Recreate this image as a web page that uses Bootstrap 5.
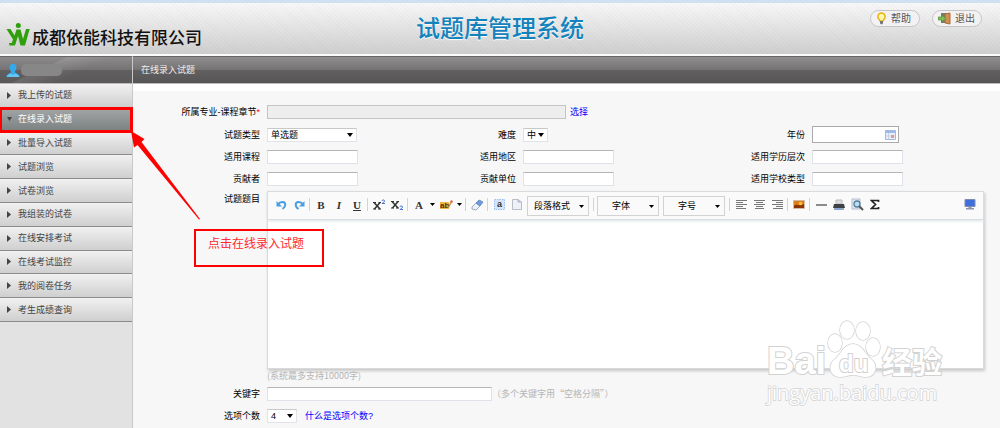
<!DOCTYPE html>
<html lang="zh-CN">
<head>
<meta charset="utf-8">
<meta name="viewport" content="width=device-width, initial-scale=1">
<title>试题库管理系统</title>
<link href="https://cdn.jsdelivr.net/npm/bootstrap@5.3.0/dist/css/bootstrap.min.css" rel="stylesheet">
<style>
body{font-family:"Liberation Sans","Noto Sans CJK SC",sans-serif;font-size:9px;line-height:12px;color:#000;background:#f7f7f7}
a{color:#00f;text-decoration:none}
.site-head{height:56px;border-top:3px solid #cfe0f0;border-bottom:2px solid #fafafa;background:repeating-linear-gradient(45deg,rgba(0,0,0,.02) 0 1px,transparent 1px 3px),linear-gradient(#f8f8f8,#cecece)}
.brand{font-size:17px;line-height:24px;font-weight:500;color:#111;padding:20px 0 0 6px;gap:2px}
.sys-title{font-size:24px;line-height:28px;font-weight:500;color:#1483bd;text-shadow:0 1px 1px #fff;padding-top:12px}
.pill{height:17px;width:50px;border:1px solid #c6c6c6;border-radius:9px;background:#f3f1f3;font-size:10px;line-height:12px;color:#555;padding:0 0 0 5px}
.head-actions{padding:7px 18px 0 0;gap:12px}
.dark-bar{height:28px;border-top:1px solid #686566;border-bottom:1px solid #bbb;background:linear-gradient(#918e8f,#757273 50%,#625f60 51%,#575455);color:#eee}
.side{width:133px;background:#e2e2e2;border-right:1px solid #c9c9c9}
.user-bar{background:linear-gradient(155deg,transparent 35%,rgba(255,255,255,.1) 37%,transparent 60%),linear-gradient(#8d8a8b,#757273 50%,#625f60 51%,#5b5859);padding-left:6px}
.user-name{width:41px;height:12px;border-radius:5px;background:#878787;margin-left:1px}
.menu{height:238px;grid-auto-rows:1fr}
.menu-link{color:#444;background:linear-gradient(#f1f1f1,#cfcfcf);border-bottom:1px solid #8c8c8c;padding-left:7px;gap:6px}
.menu-link.on{color:#fff;background:linear-gradient(#a3a7a8,#7b8080);outline:3px solid #f00;outline-offset:-2px;z-index:2;position:relative}
.panel{border-top:7px solid #fff;padding-top:10px;background:#f7f7f7}
.fields{grid-template-columns:127px 196fr 60px 229fr 60px 195fr;grid-template-rows:22px 23px 22px 21px auto 13px 24px 19px}
.fields label{text-align:right;white-space:nowrap}
.req{color:#f00}
.fld{padding-left:7px;display:flex;align-items:center;min-width:0}
.wide{grid-column:2 / -1}
.box-in{width:91px;height:14px;border:1px solid #dfe2e8;border-top-color:#b5b5b5;background:#fff;padding:0 3px;font-size:9px}
.w-major{width:299px;background:#eee;border-color:#c4c4c4}
.w-key{width:225px}
.year{width:87px;height:17px;border:1px solid #aaa;padding-right:16px}
.pick{appearance:none;height:14px;border:1px solid #e1e3e8;border-top-color:#c8c8c8;border-radius:0;padding:0 0 0 3px;font-size:9px;line-height:12px;color:#000;background:#fff url("data:image/svg+xml,%3Csvg xmlns='http://www.w3.org/2000/svg' width='6' height='4'%3E%3Cpath d='M0 0h6L3 4z'/%3E%3C/svg%3E") no-repeat right 3px center}
.editor{border:1px solid #dadada;background:#fff;box-shadow:1px 2px 3px rgba(0,0,0,.2);margin:2px 16px 0 7px;min-height:178px}
.tools{height:28px;background:#fafafa;border-bottom:1px solid #d9dfe3;box-shadow:0 1px 3px #d9e2e6;padding:0 4px}
.tools button{width:18px;height:20px;border:0;background:none;padding:0;display:flex;align-items:center;justify-content:center;font:bold 11px/14px "Liberation Serif",serif;color:#333;flex:none;margin-top:-2px}
.tools button.drop{width:9px}
.sep{width:1px;height:13px;margin:-2px 2px 0 1px;background:#d3d3d3;flex:none}
.pick.fmt{width:62px;height:20px;margin:0 3px 0 1px;border:1px solid #d2d2d2;padding-left:6px;background-color:#fafafa;background-size:5px 3px;background-position:right 4px top 8px}
.pick.fmt.mid{padding-left:14px}
.write{height:148px;border:0;resize:none;display:block;background:transparent}
.hint{color:#b5b5b5;font-family:"Noto Sans CJK SC",sans-serif}
.note{position:absolute;left:194px;top:229px;width:130px;height:38px;border:2px solid #f00;font-size:12px;line-height:16px;color:#ff2a2a;padding:5px 0 0 12px}
.arrow{position:absolute;left:131px;top:130px}
.stamp{position:absolute;right:50px;top:316px;pointer-events:none}
</style>
</head>
<body class="position-relative d-flex flex-column min-vh-100">
<header class="site-head d-flex justify-content-between position-relative">
  <div class="brand d-flex">
    <svg width="24" height="24" viewBox="0 0 24 24" aria-hidden="true"><g fill="#2f9f0b"><circle cx="12.300" cy="2.600" r="2.500"/><path d="M.5 6H4.500L8.500 12.500 10.500 6.500h4L17 16l3-10h3.700L19 22.500h-4.500L12 13 9 22.500H3.500L3 20H5.800L7 16.500z"/></g></svg>
    <span class="pt-1">成都依能科技有限公司</span>
  </div>
  <div class="sys-title position-absolute start-50 translate-middle-x">试题库管理系统</div>
  <div class="head-actions d-flex">
    <button class="pill d-flex align-items-center gap-1" type="button"><svg width="11" height="13" viewBox="0 0 11 13"><path d="M5.500 1a3.700 3.700 0 0 0-2.200 6.600L4 9h3l.7-1.400A3.700 3.700 0 0 0 5.500 1z" fill="#fff7b0" stroke="#e9b711" stroke-width="1.500"/><path d="M4 9h3v2.500l-1.500 1L4 11.500z" fill="#777"/></svg>帮助</button>
    <button class="pill d-flex align-items-center gap-1" type="button"><svg width="13" height="13" viewBox="0 0 13 13"><path d="M3 1h6v10H3z" fill="#777b73"/><path d="M7 2l5-1v11l-5-1z" fill="#cf9050" stroke="#ad6c32"/><path d="M0 5h4V3l4 3.500L4 10V8H0z" fill="#7dbd57" stroke="#4b8a36" stroke-width=".6"/></svg>退出</button>
  </div>
</header>
<div class="d-flex flex-grow-1">
  <nav class="side flex-shrink-0" aria-label="主菜单">
    <div class="dark-bar user-bar d-flex align-items-center">
      <svg width="14" height="15" viewBox="0 0 14 15" aria-hidden="true"><path d="M7 1c3 0 4 2 3.300 4.500C10 7 9 8 9 9c0 1.500 4.500 1.500 4.700 5H.3C.5 10.500 5 10.500 5 9c0-1-1-2-1.300-3.500C3 3 4 1 7 1z" fill="#35a9e9"/><path d="M1 14c0-2 2-3 4-3.500l2 1.500 2-1.500c2 .5 4 1.500 4 3.500z" fill="#63c6f5"/></svg>
      <span class="user-name"></span>
    </div>
    <div class="menu d-grid" id="menu"></div>
  </nav>
  <main class="flex-grow-1">
    <div class="dark-bar d-flex align-items-center px-2">在线录入试题</div>
    <form class="panel">
      <div class="fields d-grid align-items-center">
        <label for="major">所属专业-课程章节<span class="req">*</span></label>
        <div class="fld wide"><input class="box-in w-major" id="major" readonly><a class="ms-1" href="#">选择</a></div>

        <label for="kind">试题类型</label>
        <div class="fld"><select class="pick" id="kind" style="width:90px"><option>单选题</option></select></div>
        <label for="hard">难度</label>
        <div class="fld"><select class="pick" id="hard" style="width:25px"><option>中</option></select></div>
        <label for="year">年份</label>
        <div class="fld"><input class="box-in year" id="year"><svg class="flex-shrink-0" style="margin-left:-14px" width="11" height="10" viewBox="0 0 11 10"><path d="M.5.500h10v9H.5z" fill="#e8eefa" stroke="#a5b8de"/><path d="M1 1h9v2H1z" fill="#9db9ea"/><path d="M3.500 3v6M1 6h9" stroke="#b9c7e4" stroke-width=".7"/><path d="M6 5h3v3H6z" fill="#e89a86"/></svg></div>

        <label for="course">适用课程</label><div class="fld"><input class="box-in" id="course"></div>
        <label for="area">适用地区</label><div class="fld"><input class="box-in" id="area"></div>
        <label for="level">适用学历层次</label><div class="fld"><input class="box-in" id="level"></div>

        <label for="giver">贡献者</label><div class="fld"><input class="box-in" id="giver"></div>
        <label for="unit">贡献单位</label><div class="fld"><input class="box-in" id="unit"></div>
        <label for="school">适用学校类型</label><div class="fld"><input class="box-in" id="school"></div>

        <label class="align-self-start pt-1" for="subject">试题题目</label>
        <div class="editor wide">
          <div class="tools d-flex align-items-center">
            <button type="button" title="撤销"><svg width="11" height="10" viewBox="0 0 11 10"><path d="M2 4.500C4 1.500 9 1 9.300 4.500 9.300 6.500 8 8 6.500 9" fill="none" stroke="#4b9ee0" stroke-width="2"/><path d="M.5 1v5.500H6z" fill="#4b9ee0"/></svg></button>
            <button type="button" title="重做"><svg width="11" height="10" viewBox="0 0 11 10"><path d="M9 4.500C7 1.500 2 1 1.700 4.500 1.700 6.500 3 8 4.500 9" fill="none" stroke="#4b9ee0" stroke-width="2"/><path d="M10.500 1v5.500H5z" fill="#4b9ee0"/></svg></button>
            <span class="sep"></span>
            <button type="button" title="粗体">B</button>
            <button type="button" title="斜体"><i>I</i></button>
            <button type="button" title="下划线"><u>U</u></button>
            <span class="sep"></span>
            <button type="button" title="上标"><svg width="13" height="12" viewBox="0 0 13 12"><path d="M1 3.500l6 6.500M7 3.500L1.500 10" stroke="#333" stroke-width="1.500"/><path d="M0 3.500h3M5.500 3.500H8M0 10h3M5 10h3" stroke="#333"/><path d="M9 2c0-1.500 2.500-1.500 2.500 0S9 4 9 4.500h3" fill="none" stroke="#4a74dc"/></svg></button>
            <button type="button" title="下标"><svg width="13" height="12" viewBox="0 0 13 12"><path d="M1 2.500l6 6.500M7 2.500L1.500 9" stroke="#333" stroke-width="1.500"/><path d="M0 2.500h3M5.500 2.500H8M0 9h3M5 9h3" stroke="#333"/><path d="M9 8c0-1.500 2.500-1.500 2.500 0S9 10 9 10.500h3" fill="none" stroke="#4a74dc"/></svg></button>
            <span class="sep"></span>
            <button type="button" title="字体颜色">A</button>
            <button type="button" class="drop" title="选择字体颜色"><svg width="5" height="3"><path d="M0 0h5L2.500 3z"/></svg></button>
            <button type="button" title="背景色"><svg width="13" height="10" viewBox="0 0 13 10"><path d="M0 2h9v7H0z" fill="#f2b443"/><text x="0" y="8" font-family="Liberation Sans" font-size="8" font-weight="bold" fill="#4b3108">ab</text><path d="M12 1L8 8" stroke="#c98a4b" stroke-width="1.500"/><circle cx="11.500" cy="1.500" r="1.200" fill="#e26448"/></svg></button>
            <button type="button" class="drop" title="选择背景色"><svg width="5" height="3"><path d="M0 0h5L2.500 3z"/></svg></button>
            <span class="sep"></span>
            <button type="button" title="清除格式"><svg width="13" height="12" viewBox="0 0 13 12"><path d="M1 8l4-4 4 3-4 4-4-1z" fill="#eef2fa" stroke="#9ba9c3"/><path d="M5 4l3-3 4 2-3 4z" fill="#6b9ade" stroke="#7292c2"/></svg></button>
            <span class="sep"></span>
            <button type="button" title="全选"><svg width="11" height="11" viewBox="0 0 11 11"><path d="M.5.500h10v10H.5z" fill="#d5e5ff" stroke="#9cbcf4" stroke-dasharray="1.500 1"/><text x="3" y="8" font-family="Liberation Sans" font-size="9" font-weight="bold" fill="#333">a</text></svg></button>
            <button type="button" title="清空文档"><svg width="10" height="11" viewBox="0 0 10 11"><path d="M.5.500H6L9.500 3v7.500h-9z" fill="#eef1f7" stroke="#b9bdc6"/><path d="M6 .5V3h3.500" fill="#c9d1e2" stroke="#a9b3c8"/></svg></button>
            <select class="pick fmt" aria-label="段落格式"><option>段落格式</option></select>
            <span class="sep"></span>
            <select class="pick fmt mid" aria-label="字体"><option>字体</option></select>
            <select class="pick fmt mid" aria-label="字号"><option>字号</option></select>
            <span class="sep"></span>
            <button type="button" title="左对齐"><svg width="11" height="10"><path d="M0 .5h11M0 2.500h7M0 4.500h11M0 6.500h7M0 8.500h10" stroke="#777"/></svg></button>
            <button type="button" title="居中"><svg width="11" height="10"><path d="M0 .5h11M2 2.500h7M0 4.500h11M2 6.500h7M1 8.500h9" stroke="#777"/></svg></button>
            <button type="button" title="右对齐"><svg width="11" height="10"><path d="M0 .5h11M4 2.500h7M0 4.500h11M4 6.500h7M1 8.500h10" stroke="#777"/></svg></button>
            <span class="sep"></span>
            <button type="button" title="图片"><svg width="12" height="9" viewBox="0 0 12 9"><path d="M.5.500h11v8H.5z" fill="#e07a16" stroke="#cdbba8"/><path d="M1 6c3-3 5 1 10-2v4H1z" fill="#8b3207"/><circle cx="7.500" cy="3.500" r="1.700" fill="#ffc247"/></svg></button>
            <span class="sep"></span>
            <button type="button" title="分隔线"><svg width="11" height="2"><path d="M0 1h11" stroke="#666" stroke-width="1.500"/></svg></button>
            <button type="button" title="打印"><svg width="12" height="12" viewBox="0 0 12 12"><path d="M3 1h6v4H3z" fill="#ddd" stroke="#bbb"/><path d="M1 5h10l1 4H0z" fill="#3d4044"/><path d="M1 9h10v2H1z" fill="#a5a9ae"/><path d="M3 9.500h6V11H3z" fill="#7ba4f1"/></svg></button>
            <button type="button" title="预览"><svg width="13" height="13" viewBox="0 0 13 13"><path d="M1 1h8v10H1z" fill="#e4e8ef" stroke="#b4bccb"/><circle cx="6" cy="6" r="3" fill="#b7e1f2" stroke="#567f9b" stroke-width="1.300"/><path d="M8.300 8.300L12 12" stroke="#555" stroke-width="2"/></svg></button>
            <button type="button" title="特殊符号"><svg width="10" height="11" viewBox="0 0 10 11"><path d="M8.500 3V1.500H1.500l4 4-4 4h7V8" fill="none" stroke="#222" stroke-width="1.700"/></svg></button>
            <button type="button" class="ms-auto" title="全屏"><svg width="12" height="11" viewBox="0 0 12 11"><path d="M1 .5h10v7H1z" fill="#3f6fdc" stroke="#7d8db0"/><path d="M4.500 8h3v1H10v1.500H2V9h2.500z" fill="#8b94a8"/></svg></button>
          </div>
          <textarea class="write w-100" id="subject"></textarea>
        </div>

        <div class="fld wide hint">(系统最多支持10000字)</div>

        <label for="keys">关键字</label>
        <div class="fld wide"><input class="box-in w-key" id="keys"><span class="hint">（多个关键字用“空格分隔”）</span></div>
        <label for="count">选项个数</label>
        <div class="fld wide"><select class="pick" id="count" style="width:30px"><option>4</option></select><a class="ms-2" href="#">什么是选项个数?</a></div>
      </div>
    </form>
  </main>
</div>
<div class="note">点击在线录入试题</div>
<svg class="arrow" width="70" height="91" viewBox="0 0 70 91" aria-hidden="true"><path d="M0 1L13.500 9l-3 3L69 89l-1 .5L6.500 15 3 17.500z" fill="#f00"/></svg>
<svg class="stamp" width="186" height="94" viewBox="0 0 186 94">
  <g fill="#fff" stroke="#d2d2d2" stroke-width="2" paint-order="stroke" font-family="Liberation Sans,Noto Sans CJK SC,sans-serif" font-weight="bold">
    <text x="3" y="58" font-size="38">Bai</text>
    <text x="118" y="57" font-size="30">经验</text>
    <g stroke-width="1.500"><ellipse cx="71" cy="27" rx="7" ry="9"/><ellipse cx="83" cy="14" rx="7" ry="9"/><ellipse cx="99" cy="15" rx="7" ry="9"/><ellipse cx="109" cy="31" rx="7" ry="9"/>
    <path d="M89 28c9 0 12 10 18 15 8 6 5 18-5 18-5 0-8-2-13-2s-8 2-13 2c-10 0-13-12-5-18 6-5 9-15 18-15z"/></g>
    <text x="75" y="56" font-size="24">du</text>
    <text x="3" y="84" font-size="20" font-family="Open Sans,sans-serif" font-weight="normal" stroke-width="1.500">jingyan.baidu.com</text>
  </g>
</svg>
<script src="https://cdn.jsdelivr.net/npm/bootstrap@5.3.0/dist/js/bootstrap.bundle.min.js"></script>
<script>
const items=["我上传的试题","在线录入试题","批量导入试题","试题浏览","试卷浏览","我组装的试卷","在线安排考试","在线考试监控","我的阅卷任务","考生成绩查询"];
document.getElementById("menu").innerHTML=items.map((t,i)=>`<a class="menu-link d-flex align-items-center${i===1?" on":""}" href="#"><svg width="5" height="7" viewBox="0 0 5 7"><path d="${i===1?"M0 1h5L2.500 5z":"M0 0l4 3.500L0 7z"}" fill="#444"/></svg>${t}</a>`).join("");
</script>
</body>
</html>
